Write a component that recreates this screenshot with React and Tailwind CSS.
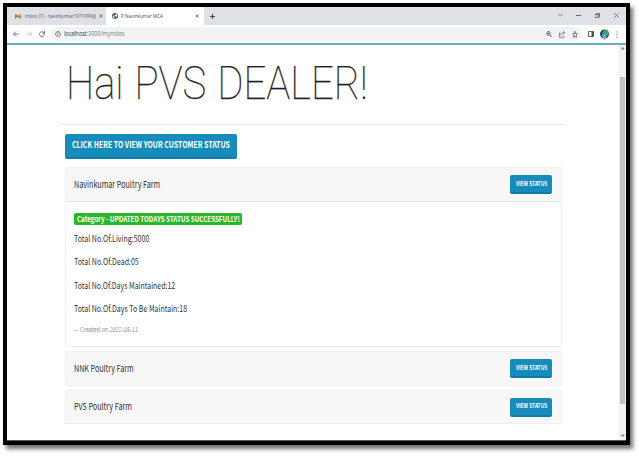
import { useLayoutEffect, useRef, useState } from "react";

// Single line of text condensed horizontally to a given width.
function Fit({ w, className = "", children }) {
  const ref = useRef(null);
  const [scale, setScale] = useState(1);
  useLayoutEffect(() => {
    setScale(w / ref.current.offsetWidth);
  }, [w]);
  return (
    <span className="block shrink-0" style={{ width: w }}>
      <span
        ref={ref}
        className={`block w-max origin-left whitespace-nowrap ${className}`}
        style={{ transform: `scaleX(${scale})` }}
      >
        {children}
      </span>
    </span>
  );
}

function Gmail() {
  return (
    <svg className="h-[5px] w-[6px] shrink-0" viewBox="0 0 24 18">
      <path d="M0 2v16h5V8z" fill="#4285f4" />
      <path d="M24 2v16h-5V8z" fill="#34a853" />
      <path d="M0 3q1-4 5-2l7 6 7-6q4-2 5 2v2l-12 9L0 5z" fill="#ea4335" />
      <path d="M19 1q4-2 5 2v2l-5 4z" fill="#fbbc04" />
    </svg>
  );
}

function Globe() {
  return (
    <svg className="h-[6px] w-[6px] shrink-0" viewBox="0 0 24 24">
      <circle cx="12" cy="12" r="12" fill="#50555a" />
      <path d="M3 9l6 5v3l3 5C6 22 1 16 3 9zM13 3l6 2 2 6-4 6-3-4-5-1 1-3 4-1z" fill="#e8eaed" />
    </svg>
  );
}

const line = { fill: "none", stroke: "currentColor", strokeLinecap: "round", strokeLinejoin: "round" };

function Icon({ className, d, sw = 2.6 }) {
  return (
    <svg className={`shrink-0 ${className}`} viewBox="0 0 24 24" preserveAspectRatio="none" {...line} strokeWidth={sw}>
      <path d={d} />
    </svg>
  );
}

const X = "M4 4l16 16M20 4L4 20";

function TabBar() {
  return (
    <div className="flex h-[18px] bg-[#dee1e6] text-[#3c4043]">
      <div className="flex w-[99px] items-center pl-[8px]">
        <Gmail />
        <div className="ml-[4px] w-[71px] overflow-hidden">
          <Fit w={71} className="text-[6px] leading-[8px] text-[#55595e]">Inbox (7) - navinkumar1971999@</Fit>
        </div>
        <Icon className="ml-[3px] h-[4px] w-[4px]" d={X} sw={4} />
      </div>
      <div className="flex w-[98px] items-center rounded-t-[3px] bg-white pl-[6px]">
        <Globe />
        <div className="ml-[3px]">
          <Fit w={42} className="text-[6px] leading-[8px] text-[#45494d]">P.Navinkumar MCA</Fit>
        </div>
        <Icon className="ml-[32px] h-[4px] w-[4px]" d={X} sw={4} />
      </div>
      <Icon className="ml-[6px] mt-[6.500px] h-[5px] w-[5px]" d="M12 2v20M2 12h20" sw={5} />
      <div className="ml-auto flex h-[16px] items-center pr-[7px] text-[#55585c]">
        <Icon className="h-[4px] w-[5px]" d="M2 7l10 10L22 7" sw={3.5} />
        <Icon className="ml-[13px] h-[5px] w-[5px]" d="M1 12h22" sw={4} />
        <Icon className="ml-[14px] h-[5px] w-[5px]" d="M2 7h15v15H2zM7 7V2h15v15h-5" sw={4} />
        <Icon className="ml-[14px] h-[5px] w-[5px]" d="M2 2l20 20M22 2L2 22" sw={3.5} />
      </div>
    </div>
  );
}

function Toolbar() {
  return (
    <div className="flex h-[18px] items-center bg-white text-[#5f6368]">
      <Icon className="ml-[6px] h-[6px] w-[6px]" d="M22 12H3M11 3l-9 9 9 9" sw={3.2} />
      <Icon className="ml-[7px] h-[6px] w-[6px] text-[#b4b7ba]" d="M2 12h19M13 3l9 9-9 9" sw={3.2} />
      <Icon className="ml-[7px] h-[6px] w-[6px]" d="M21 8A10 10 0 1 0 22 14M22 2v7h-7" sw={3.4} />
      <div className="ml-[6px] flex h-[14px] w-[531px] items-center rounded-full bg-[#f1f3f4] pl-[4px] pr-[4px]">
        <Icon className="h-[6px] w-[6px]" d="M12 2a10 10 0 1 0 .1 0M12 11v6M12 7v.1" sw={3} />
        <div className="ml-[3px]">
          <Fit w={60} className="text-[6.5px] leading-[8px] text-[#777b80]">
            <span className="text-[#303337]">localhost</span>:3000/mynotes
          </Fit>
        </div>
        <div className="ml-auto flex items-center">
          <Icon className="h-[6px] w-[6px]" d="M10 2a8 8 0 1 0 .1 0M16 16l7 7M7 10h6M10 7v6" sw={3.4} />
          <Icon className="ml-[7px] h-[7px] w-[6px]" d="M4 7H2v15h18v-5M7 15c0-6 5-9 14-9M16 1l6 5-6 5" sw={2.6} />
          <Icon className="ml-[7px] h-[7px] w-[6px]" d="M12 2l3 7 7 .5-5.500 5 2 7.500-6.500-4-6.500 4 2-7.500-5.500-5 7-.5z" sw={3} />
        </div>
      </div>
      <svg className="ml-[6px] h-[6px] w-[6px] shrink-0" viewBox="0 0 24 24">
        <path d="M2 2h20v20H2z" fill="none" stroke="#4b4f54" strokeWidth="3.500" />
        <path d="M14 2h8v20h-8z" fill="#4b4f54" />
      </svg>
      <svg className="ml-[6px] h-[11px] w-[9px] shrink-0" viewBox="0 0 18 22">
        <ellipse cx="9" cy="10" rx="9" ry="9" fill="#263c7a" />
        <path d="M9 1q9 1 9 9l-5 4-8-7z" fill="#42a84a" />
        <path d="M5 8l9 5-4 7-6-4z" fill="#40b9dc" />
        <path d="M9 16l4 1-3 5-3-3z" fill="#c987b2" />
      </svg>
      <Icon className="ml-[5px] h-[7px] w-[6px]" d="M12 3v.1M12 12v.1M12 21v.1" sw={4.5} />
    </div>
  );
}

const sans = "font-['Noto_Sans_CJK_SC','Open_Sans',sans-serif]";

function CardHeader({ name, width, className }) {
  return (
    <div className={`flex items-center justify-between bg-[#f7f7f7] pl-[8px] pr-[9px] ${className}`}>
      <Fit w={width} className="pb-[2px] text-[9.3px] leading-[14px] text-[#2f2f2f]">{name}</Fit>
      <button className="flex h-[19px] w-[42px] items-center justify-center rounded-[2px] border-b-2 border-[#0f7aa6] bg-[#158cba]">
        <Fit w={31} className="text-[5.8px] font-bold leading-[10px] text-white">VIEW STATUS</Fit>
      </button>
    </div>
  );
}

function Stat({ w, children }) {
  return (
    <p className="flex h-[23.300px] items-start">
      <Fit w={w} className="text-[9.2px] leading-[14px] text-[#333]">{children}</Fit>
    </p>
  );
}

export default function App() {
  return (
    <div className={`h-[457px] w-[639px] overflow-hidden bg-white pl-[3px] pt-[3px] ${sans}`}>
      <div className="flex h-[442px] w-[627px] flex-col border-4 border-black bg-white shadow-[3px_4px_4px_rgba(0,0,0,0.55)]">
        <div className="font-['Open_Sans',sans-serif]">
          <TabBar />
          <Toolbar />
        </div>
        <div className="h-[2px] shrink-0 bg-[#68adc5]" />
        <div className="flex min-h-0 flex-1">
          <main className="flex-1 pl-[53px]">
            <h1 className="mt-[10px] h-[69px] pl-[6px] pt-[2px]">
              <Fit w={301.500} className="font-['Roboto',sans-serif] text-[45.500px] font-thin leading-[54px] text-[#222] [-webkit-text-stroke:0.25px_#222] [word-spacing:1.5px]">Hai PVS DEALER!</Fit>
            </h1>
            <hr className="w-[506px] border-[#ebebeb]" />
            <div className="ml-[5px] w-[497px]">
              <button className="mt-[9px] flex h-[25px] w-[172px] items-center justify-center rounded-[2px] border-b-2 border-[#127fab] bg-[#158cba] pb-px">
                <Fit w={158} className="text-[9px] font-bold leading-[14px] text-white">CLICK HERE TO VIEW YOUR CUSTOMER STATUS</Fit>
              </button>
              <section className="mt-[8px] h-[180px] rounded-[2px] border border-[#f0f0f0]">
                <CardHeader name="Navinkumar Poultry Farm" width={86} className="h-[34px] border-b border-[#e7e7e7]" />
                <div className="pl-[8px] pt-[11px]">
                  <div className="flex h-[12px] w-[168px] items-center justify-center rounded-[2px] bg-[#28b62c]">
                    <Fit w={163} className="text-[7.800px] font-bold leading-[12px] text-white">Category - UPDATED TODAYS STATUS SUCCESSFULLY!</Fit>
                  </div>
                  <div className="mt-[6px]">
                    <Stat w={75}>Total No.Of.Living:5000</Stat>
                    <Stat w={65}>Total No.Of.Dead:05</Stat>
                    <Stat w={101}>Total No.Of.Days Maintained:12</Stat>
                    <Stat w={113}>Total No.Of.Days To Be Maintain:18</Stat>
                  </div>
                  <Fit w={63.500} className="text-[6.600px] leading-[10px] text-[#8a8a8a]">
                    — Created on <i>2022-05-11</i>
                  </Fit>
                </div>
              </section>
              <section className="mt-[4px] rounded-[2px] border border-[#f0f0f0]">
                <CardHeader name="NNK Poultry Farm" width={60} className="h-[33px]" />
              </section>
              <section className="mt-[4px] rounded-[2px] border border-[#f0f0f0]">
                <CardHeader name="PVS Poultry Farm" width={58} className="h-[32px]" />
              </section>
            </div>
          </main>
          <div className="flex w-[7px] flex-col items-center bg-[#f1f1f1]">
            <Icon className="mt-[2px] h-[3px] w-[4px] text-[#555]" d="M12 6l7 10H5z" sw={5} />
            <div className="mt-[27px] h-[327px] w-[5px] bg-[#c1c1c1]" />
            <Icon className="mb-[3px] mt-auto h-[3px] w-[4px] text-[#555]" d="M12 18l7-10H5z" sw={5} />
          </div>
        </div>
        <div className="h-px shrink-0 bg-[#55595e]" />
      </div>
    </div>
  );
}
